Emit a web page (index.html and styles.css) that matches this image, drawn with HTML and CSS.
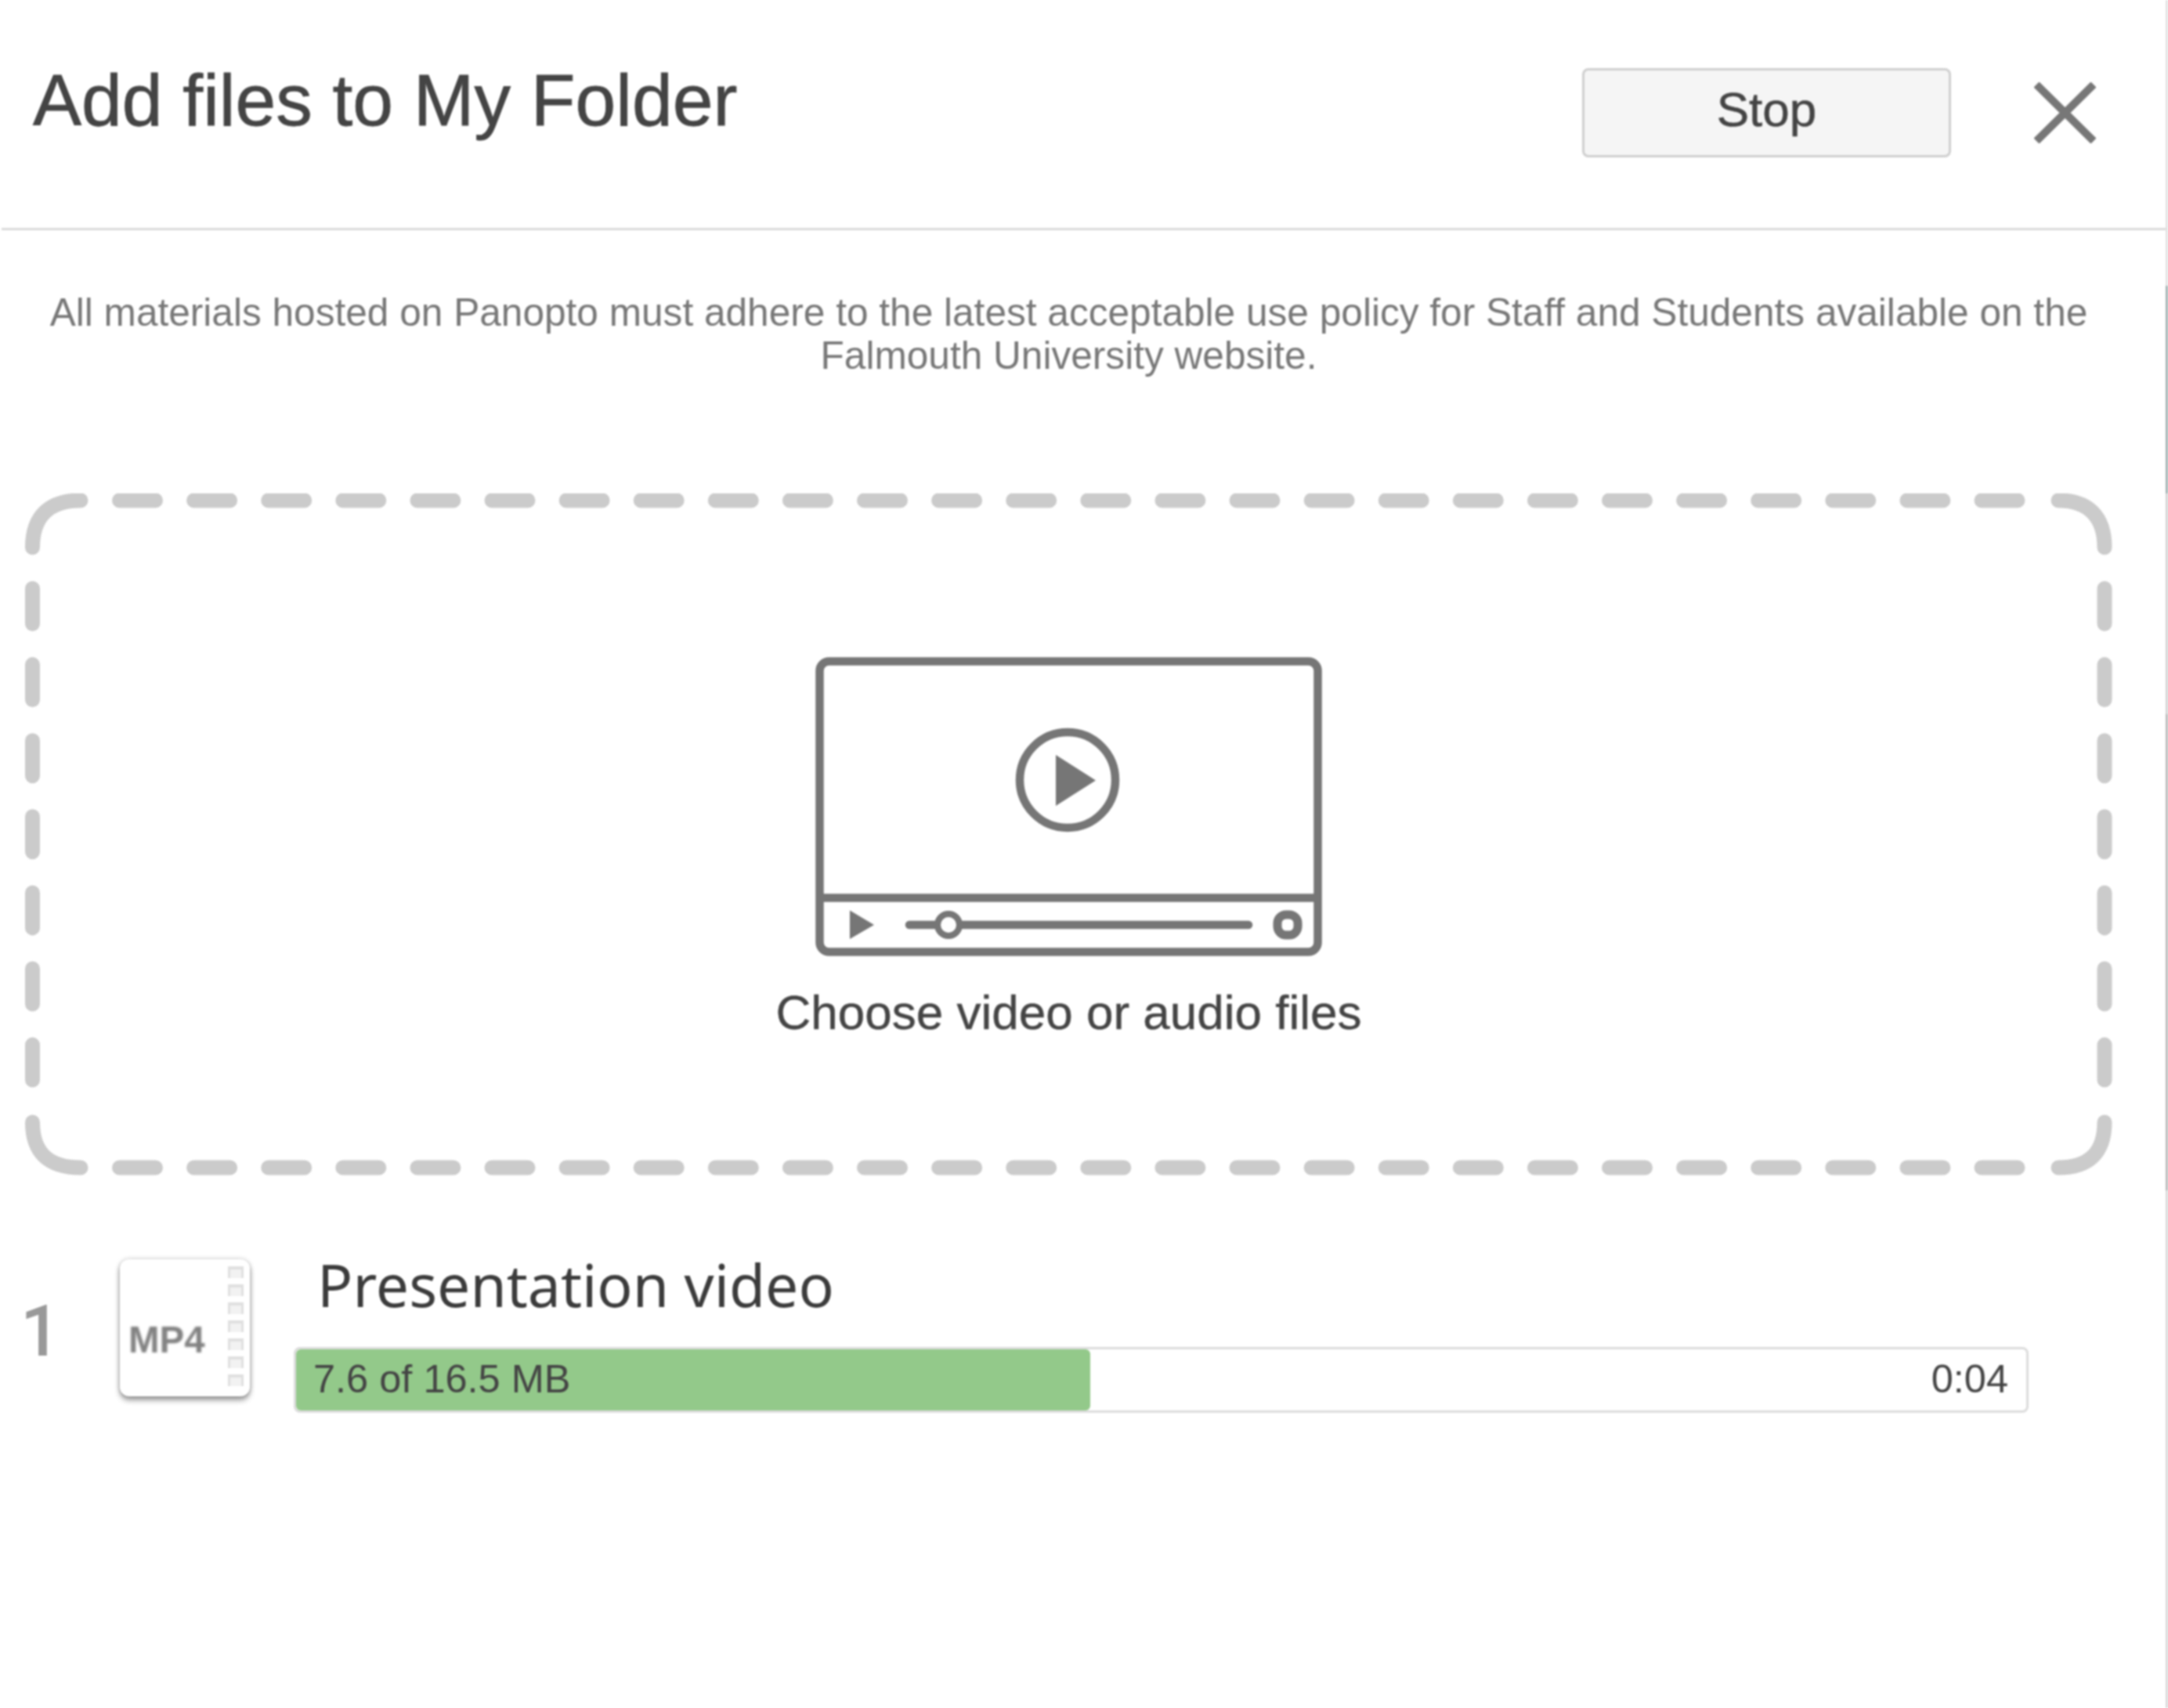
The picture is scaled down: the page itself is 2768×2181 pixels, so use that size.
FILE: index.html
```html
<!DOCTYPE html>
<html lang="en">
<head>
    <meta charset="UTF-8">
    <title>Add files to My Folder</title>
    <link rel="stylesheet" href="styles.css">
</head>
<body>
    <div class="page">
        <div class="dialog">
            <header class="dialog-header">
                <h1 class="dialog-title">Add files to My Folder</h1>
                <button class="stop-button">Stop</button>
                <svg class="close-icon" viewBox="0 0 79 78">
                    <path d="M3 3L76 75M76 3L3 75"/>
                </svg>
            </header>

            <div class="dialog-body">
                <p class="notice">All materials hosted on Panopto must adhere to the latest acceptable use policy for Staff and Students available on the<br>Falmouth University website.</p>

                <div class="dropzone">
                    <!-- dashed outline, corners drawn apart so the dashes line up -->
                    <svg class="dropzone-outline" viewBox="0 0 2665 871">
                        <path d="M9.5 69C9.5 30 30 9 71 9"/>
                        <path d="M2596 9C2635 9 2655 30 2655 69"/>
                        <path d="M9.5 803C9.5 842 30 861 71 861"/>
                        <path d="M2655 803C2655 842 2635 861 2596 861"/>
                        <path class="dash-h" d="M120.5 9H2545"/>
                        <path class="dash-h" d="M120.5 861H2545"/>
                        <path class="dash-v" d="M9.5 121.5V751"/>
                        <path class="dash-v" d="M2655 121.5V751"/>
                    </svg>
                    <svg class="video-icon" viewBox="0 0 647 382">
                        <rect class="line" x="5.5" y="5.5" width="636" height="371" rx="12"/>
                        <path class="line" d="M5 307.5H642"/>
                        <circle class="line" cx="322" cy="157" r="61"/>
                        <path class="solid" d="M307 125L358 157.5L307 190Z"/>
                        <path class="solid" d="M44 323.5L75 342L44 360Z"/>
                        <path class="line round" d="M120 342H553"/>
                        <circle class="knob" cx="170" cy="342" r="14"/>
                        <rect class="knob ring" x="590" y="329" width="26" height="26" rx="11"/>
                    </svg>
                    <div class="dropzone-label">Choose video or audio files</div>
                </div>

                <div class="file-row">
                    <div class="file-index">1</div>
                    <div class="file-icon">
                        <span class="file-ext">MP4</span>
                        <div class="film-strip">
                            <i></i><i></i><i></i><i></i><i></i><i></i><i></i>
                        </div>
                    </div>
                    <div class="file-info">
                        <div class="file-name">Presentation video</div>
                        <div class="progress">
                            <div class="progress-fill" style="width: 45.9%"></div>
                            <span class="progress-text">7.6 of 16.5 MB</span>
                            <span class="progress-text">0:04</span>
                        </div>
                    </div>
                </div>
            </div>
        </div>
        <div class="edge"></div>
    </div>
</body>
</html>
```

FILE: styles.css
```css
body {
    margin: 0;
    background: #fff;
    font-family: "Liberation Sans", Arial, sans-serif;
    color: #444;
    overflow: hidden;
}

.page {
    display: flex;
    height: 2181px;
    filter: blur(0.8px);
}

.dialog {
    flex: 1;
    min-width: 0;
}

/* strip of the window behind the dialog */
.edge {
    width: 3px;
    background: linear-gradient(to bottom,
        #e2e2e2 0, #e2e2e2 365px,
        #9fb0b0 365px, #9fb0b0 630px,
        #d2d2d2 630px, #d2d2d2 912px,
        #b8b8b8 912px, #b8b8b8 1520px,
        #d8d8d8 1520px);
}

/* Header */
.dialog-header {
    display: flex;
    align-items: flex-start;
    height: 291px;
    margin-left: 2px;
    border-bottom: 3px solid #dadada;
}

.dialog-title {
    flex: 1;
    margin: 78px 0 0 40px;
    font-size: 93px;
    line-height: 100px;
    font-weight: 400;
    color: #444;
    -webkit-text-stroke: 0.8px #444;
}

.stop-button {
    width: 471px;
    height: 114px;
    margin: 87px 106px 0 0;
    padding: 0 0 9px;
    border: 3px solid #cfcfcf;
    border-radius: 8px;
    background: #f5f5f5;
    font-family: inherit;
    font-size: 62px;
    color: #444;
    -webkit-text-stroke: 0.5px #444;
}

.close-icon {
    width: 79px;
    height: 78px;
    margin: 105px 89px 0 0;
    fill: none;
    stroke: #777;
    stroke-width: 10;
}

/* Body */
.dialog-body {
    padding: 0 68px 0 32px;
}

.notice {
    margin: 0;
    padding-top: 78px;
    height: 256px;
    box-sizing: border-box;
    text-align: center;
    font-size: 49.6px;
    line-height: 55px;
    color: #777;
    white-space: nowrap;
}

.dropzone {
    position: relative;
    display: flex;
    flex-direction: column;
    align-items: center;
    height: 871px;
    margin-top: 80px;
    padding-top: 209px;
    box-sizing: border-box;
}

.dropzone-outline {
    position: absolute;
    inset: 0;
    width: 100%;
    height: 100%;
    fill: none;
    stroke: #cbcbcb;
    stroke-width: 19;
    stroke-linecap: round;
}

.dash-h {
    stroke-dasharray: 46 49.1;
}

.dash-v {
    stroke-dasharray: 45 52.1;
}

.video-icon {
    width: 647px;
    height: 382px;
}

.video-icon .line {
    fill: none;
    stroke: #767676;
    stroke-width: 10.5;
}

.video-icon .round {
    stroke-linecap: round;
}

.video-icon .solid {
    fill: #767676;
}

.video-icon .knob {
    fill: #fff;
    stroke: #767676;
    stroke-width: 8;
}

.video-icon .ring {
    stroke-width: 11;
}

.dropzone-label {
    margin-top: 36px;
    font-size: 62px;
    line-height: 72px;
    color: #444;
    -webkit-text-stroke: 0.4px #444;
}

/* File row */
.file-row {
    display: flex;
    margin-top: 105px;
}

.file-index {
    width: 127px;
    margin-left: -6px;
    padding-top: 45px;
    font-family: Roboto, sans-serif;
    font-size: 90px;
    line-height: 100px;
    font-weight: 500;
    color: #999;
}

.file-icon {
    display: flex;
    justify-content: space-between;
    flex-shrink: 0;
    width: 166px;
    height: 175px;
    margin-top: 2px;
    border-radius: 12px;
    background: #fff;
    box-shadow: 0 5px 7px rgba(0, 0, 0, 0.38), 0 0 6px rgba(0, 0, 0, 0.22);
}

.file-ext {
    margin: 78px 0 0 11px;
    font-size: 47.5px;
    line-height: 50px;
    font-weight: 700;
    color: #828282;
    filter: blur(0.8px);
}

.film-strip {
    display: flex;
    flex-direction: column;
    gap: 8px;
    margin: 9px 8px 0 0;
}

.film-strip i {
    display: block;
    width: 14px;
    height: 11px;
    border: solid #e0e0e0;
    border-width: 4px 3px 0;
    background: #f2f2f2;
}

.file-info {
    flex: 1;
    margin-left: 56px;
}

.file-name {
    padding-left: 30px;
    font-family: "Noto Sans", sans-serif;
    font-size: 75px;
    line-height: 84px;
    color: #3b3b3b;
    margin-top: -8px;
}

.progress {
    position: relative;
    display: flex;
    justify-content: space-between;
    align-items: center;
    width: 2215px;
    height: 84px;
    margin-top: 38px;
    padding: 0 23px 4px 22px;
    box-sizing: border-box;
    border: 3px solid #dcdcdc;
    border-radius: 8px;
}

.progress-fill {
    position: absolute;
    left: 0;
    top: 0;
    bottom: 0;
    border-radius: 6px;
    background: #93c98a;
}

.progress-text {
    position: relative;
    font-size: 50.5px;
    color: #444;
}
```
